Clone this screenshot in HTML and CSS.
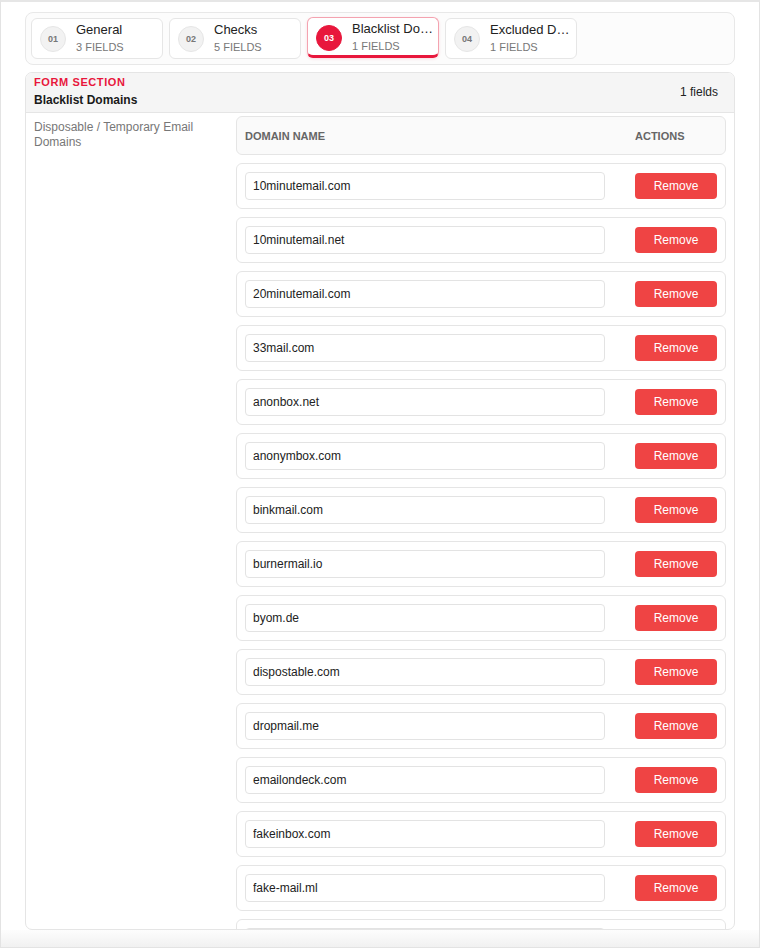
FILE: index.html
```html
<!DOCTYPE html>
<html lang="en">
<head>
    <meta charset="UTF-8">
    <meta name="viewport" content="width=device-width, initial-scale=1.0">
    <title>Blacklist Domains</title>
    <link rel="stylesheet" href="styles.css">
</head>
<body>
    <div class="frame">
        <div class="page">
            <div class="tabs">
                <div class="tab">
                    <span class="step">01</span>
                    <div class="tab-text">
                        <div class="tab-title">General</div>
                        <div class="tab-count">3 FIELDS</div>
                    </div>
                </div>
                <div class="tab">
                    <span class="step">02</span>
                    <div class="tab-text">
                        <div class="tab-title">Checks</div>
                        <div class="tab-count">5 FIELDS</div>
                    </div>
                </div>
                <div class="tab active">
                    <span class="step">03</span>
                    <div class="tab-text">
                        <div class="tab-title">Blacklist Domains</div>
                        <div class="tab-count">1 FIELDS</div>
                    </div>
                </div>
                <div class="tab">
                    <span class="step">04</span>
                    <div class="tab-text">
                        <div class="tab-title">Excluded Domains</div>
                        <div class="tab-count">1 FIELDS</div>
                    </div>
                </div>
            </div>

            <div class="section">
                <div class="section-header">
                    <div>
                        <div class="section-kicker">FORM SECTION</div>
                        <div class="section-title">Blacklist Domains</div>
                    </div>
                    <div class="section-count">1 fields</div>
                </div>

                <div class="section-body">
                    <div class="field-label">Disposable / Temporary Email Domains</div>
                    <div class="repeater">
                        <div class="repeater-head">
                            <span>DOMAIN NAME</span>
                            <span>ACTIONS</span>
                        </div>
                        <div id="rows"></div>
                    </div>
                </div>
            </div>
        </div>
        <div class="footer"></div>
    </div>

    <script>
        const domains = [
            '10minutemail.com', '10minutemail.net', '20minutemail.com', '33mail.com',
            'anonbox.net', 'anonymbox.com', 'binkmail.com', 'burnermail.io',
            'byom.de', 'dispostable.com', 'dropmail.me', 'emailondeck.com',
            'fakeinbox.com', 'fake-mail.ml', 'getnada.com', 'guerrillamail.com'
        ];

        document.getElementById('rows').innerHTML = domains.map(d => `
            <div class="repeater-row">
                <input type="text" value="${d}">
                <button>Remove</button>
            </div>
        `).join('');
    </script>
</body>
</html>
```

FILE: styles.css
```css
* {
    box-sizing: border-box;
}

body {
    margin: 0;
    font-family: "Liberation Sans", Arial, sans-serif;
    color: #222;
    background-color: white;
}

.frame {
    height: 948px;
    display: flex;
    flex-direction: column;
    border: 1px solid #e3e3e3;
    border-top: 2px solid #e6e6e6;
    overflow: hidden;
}

.page {
    flex: 1;
    min-height: 0;
    display: flex;
    flex-direction: column;
    gap: 7px;
    padding: 10px 24px 0;
}

.tabs {
    display: flex;
    gap: 6px;
    padding: 5px;
    border: 1px solid #e8e8e8;
    border-radius: 8px;
    background-color: #fcfcfc;
}

.tab {
    width: 132px;
    height: 41px;
    display: flex;
    align-items: center;
    gap: 10px;
    padding: 0 5px 0 8px;
    border: 1px solid #e6e6e6;
    border-radius: 6px;
    background-color: white;
}

.tab.active {
    transform: translateY(-1px);
    padding-top: 2px;
    border-color: #f4a3b0;
    border-bottom: 3px solid #e8173c;
    box-shadow: 0 1px 3px rgba(232,23,60,0.15);
}

.step {
    flex: none;
    width: 26px;
    height: 26px;
    display: flex;
    align-items: center;
    justify-content: center;
    border: 1px solid #e6e6e6;
    border-radius: 50%;
    background-color: #f2f2f2;
    color: #777;
    font-size: 9px;
    font-weight: bold;
}

.tab.active .step {
    border-color: #e8173c;
    background-color: #e8173c;
    color: white;
}

.tab-text {
    min-width: 0;
}

.tab-title {
    font-size: 13px;
    line-height: 16px;
    color: #222;
    white-space: nowrap;
    overflow: hidden;
    text-overflow: ellipsis;
}

.tab-count {
    margin-top: 2px;
    font-size: 11px;
    line-height: 15px;
    color: #777;
}

.section {
    flex: 1;
    min-height: 0;
    border: 1px solid #e5e5e5;
    border-radius: 7px;
    overflow: hidden;
    background-color: white;
}

.section-header {
    display: flex;
    align-items: center;
    justify-content: space-between;
    padding: 2px 16px 4px 8px;
    border-bottom: 1px solid #e5e5e5;
    background-color: #f5f5f5;
}

.section-kicker {
    font-size: 11px;
    line-height: 14px;
    font-weight: bold;
    letter-spacing: 0.6px;
    color: #e8173c;
}

.section-title {
    margin-top: 3px;
    font-size: 12px;
    line-height: 16px;
    font-weight: bold;
    color: #1a1a1a;
}

.section-count {
    font-size: 12px;
    color: #222;
}

.section-body {
    display: grid;
    grid-template-columns: 192px 1fr;
    column-gap: 10px;
    padding: 3px 8px 8px;
}

.field-label {
    padding-top: 4px;
    font-size: 12px;
    line-height: 15px;
    color: #777;
}

.repeater-head,
.repeater-row {
    display: grid;
    grid-template-columns: 1fr 82px;
    column-gap: 30px;
    align-items: center;
    padding: 8px;
    border: 1px solid #e5e5e5;
    border-radius: 6px;
}

.repeater-head {
    height: 39px;
    background-color: #fafafa;
    font-size: 11px;
    font-weight: bold;
    color: #666;
}

.repeater-row {
    margin-top: 8px;
    background-color: white;
}

.repeater-row input {
    width: 100%;
    height: 28px;
    padding: 0 7px;
    border: 1px solid #e3e3e3;
    border-radius: 4px;
    font-family: inherit;
    font-size: 12px;
    color: #222;
    background-color: white;
}

.repeater-row button {
    height: 26px;
    border: none;
    border-radius: 4px;
    background-color: #ef4444;
    color: white;
    font-family: inherit;
    font-size: 12px;
    cursor: pointer;
}

.footer {
    flex: none;
    height: 17px;
    background: linear-gradient(to bottom, #fdfdfd, #f1f1f1);
}
```
